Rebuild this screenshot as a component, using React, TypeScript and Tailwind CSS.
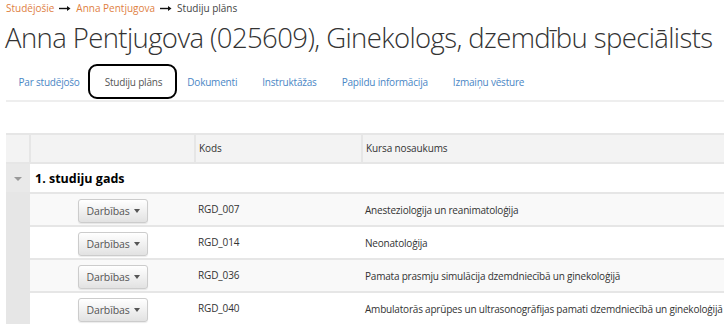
const rows = [
  { code: "RGD_007", name: "Anesteziologija un reanimatoloģija" },
  { code: "RGD_014", name: "Neonatoloģija" },
  { code: "RGD_036", name: "Pamata prasmju simulācija dzemdniecībā un ginekoloģijā" },
  { code: "RGD_040", name: "Ambulatorās aprūpes un ultrasonogrāfijas pamati dzemdniecībā un ginekoloģijā" },
];

const tabs = ["Par studējošo", "Studiju plāns", "Dokumenti", "Instruktāžas", "Papildu informācija", "Izmaiņu vēsture"];

function Arrow() {
  return (
    <svg width="12" height="7" viewBox="0 0 12 7" className="mx-[5px]">
      <path d="M0 3.5H10" stroke="#111" strokeWidth="1.4" />
      <path d="M8 1L11.5 3.5L8 6Z" fill="#111" />
    </svg>
  );
}

function Caret() {
  return <span className="ml-[4px] inline-block h-0 w-0 border-x-[3.5px] border-t-[4px] border-x-transparent border-t-[#555] align-middle" />;
}

export default function App() {
  return (
    <div className="h-[324px] w-[724px] overflow-hidden bg-white font-['Open_Sans',sans-serif] text-[#333]">
      {/* breadcrumb */}
      <div className="flex items-center pl-[6px] pt-[1px] text-[10px] leading-[15px]">
        <span className="text-[#e0803f]">Studējošie</span>
        <Arrow />
        <span className="text-[#e0803f]">Anna Pentjugova</span>
        <Arrow />
        <span className="text-[#444]">Studiju plāns</span>
      </div>

      <h1 className="mt-[3px] whitespace-nowrap pl-[5px] text-[27.5px] font-light leading-[38px] tracking-[-0.6px] text-[#333]">
        Anna Pentjugova (025609), Ginekologs, dzemdību speciālists
      </h1>

      {/* tabs */}
      <div className="ml-[6px] mt-[14px] flex border-b-2 border-[#eeeeee] text-[10px] leading-[15px] tracking-[-0.2px]">
        {tabs.map((t, i) => (
          <div
            key={t}
            className={`relative px-[12.5px] pb-[10px] pt-[4px] ${i === 1 ? "text-[#555]" : "text-[#4a86c5]"}`}
          >
            {t}
            {i === 1 && (
              <div className="absolute left-[-4px] top-[-7px] h-[35px] w-[89px] rounded-[9px] border-2 border-black" />
            )}
          </div>
        ))}
      </div>

      {/* table */}
      <table className="ml-[6px] mt-[31px] w-[718px] table-fixed border-collapse text-[10px] leading-[15px] tracking-[-0.12px]">
        <colgroup>
          <col className="w-[24px]" />
          <col className="w-[165px]" />
          <col className="w-[167px]" />
          <col />
        </colgroup>
        <thead>
          <tr className="h-[29px] border-y-2 border-[#e6e6e6] bg-[#f3f3f3]">
            <th className="border-r-2 border-[#e6e6e6]" />
            <th className="border-r-2 border-[#e6e6e6]" />
            <th className="border-r-2 border-[#e6e6e6] pl-[3px] text-left font-normal">Kods</th>
            <th className="pl-[3px] text-left font-normal">Kursa nosaukums</th>
          </tr>
        </thead>
        <tbody>
          <tr className="h-[30px] border-b-2 border-[#e6e6e6]">
            <td className="bg-[#e9e9e9] text-center">
              <span className="inline-block h-0 w-0 border-x-[4px] border-t-[4px] border-x-transparent border-t-[#999] align-middle" />
            </td>
            <td colSpan={3} className="pl-[5px] text-[12.5px] font-bold tracking-normal text-black">
              1. studiju gads
            </td>
          </tr>
          {rows.map((r, i) => (
            <tr key={r.code} className={`h-[33px] border-b-2 border-[#e6e6e6] ${i % 2 === 0 ? "bg-[#f9f9f9]" : "bg-white"}`}>
              <td className="bg-[#e6e6e6]" />
              <td className="pt-[5px] align-top">
                <button className="ml-[48px] flex h-[24px] w-[70px] items-center justify-center rounded-[3px] border border-[#cccccc] bg-gradient-to-b from-white to-[#e2e2e2] text-[10.5px] text-[#555] shadow-[0_1px_1px_rgba(0,0,0,0.08)]">
                  Darbības
                  <Caret />
                </button>
              </td>
              <td className="pl-[3px] pt-[8px] align-top">{r.code}</td>
              <td className="whitespace-nowrap pl-[3px] pt-[9px] align-top tracking-[-0.2px]">{r.name}</td>
            </tr>
          ))}
        </tbody>
      </table>
    </div>
  );
}
